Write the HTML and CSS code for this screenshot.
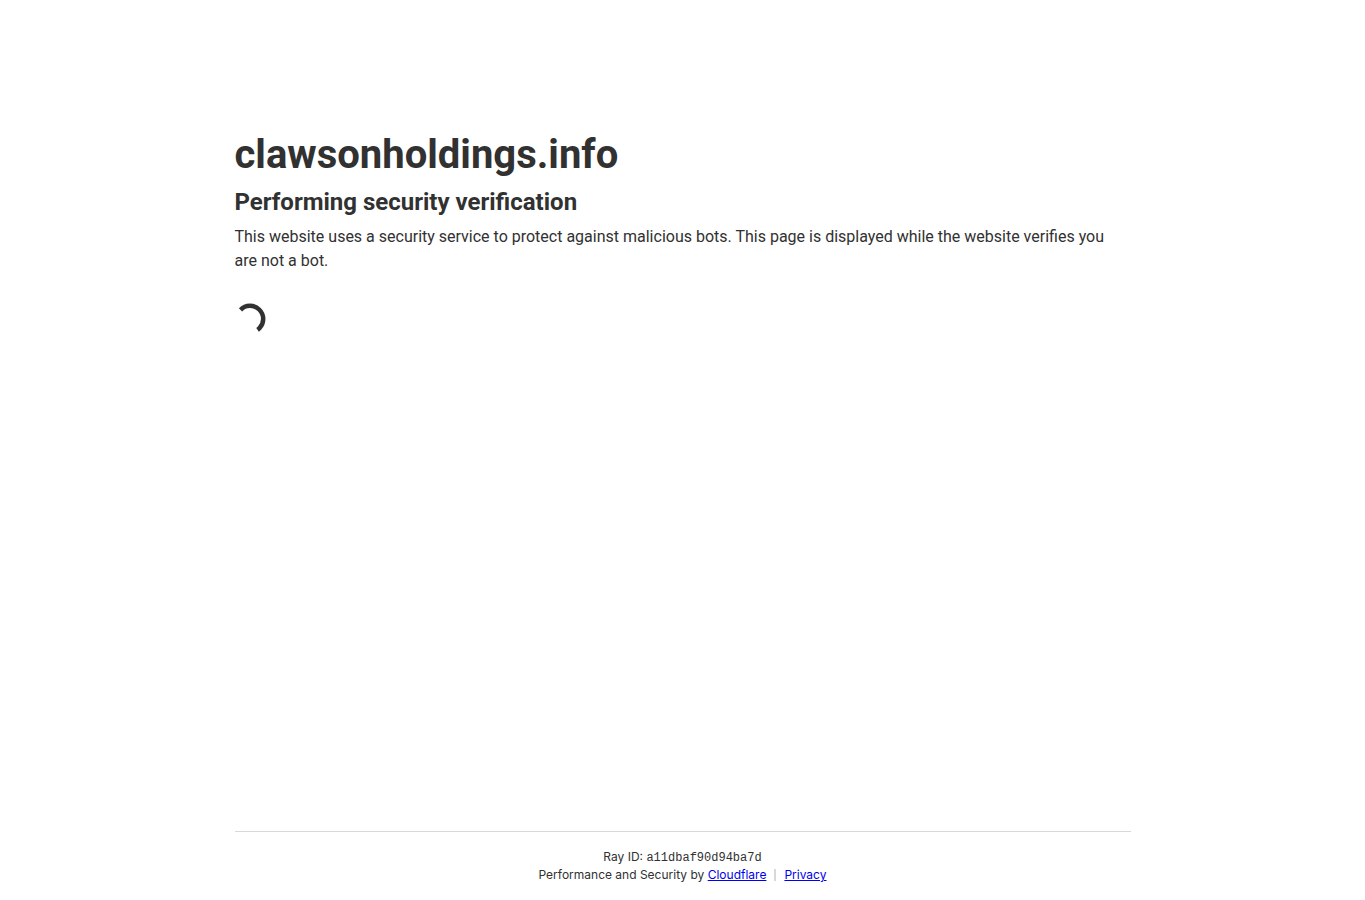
FILE: index.html
```html
<!DOCTYPE html>
<html lang="en">

<head>
  <meta charset="UTF-8" />
  <meta name="viewport" content="width=device-width, initial-scale=1.0" />
  <title>Just a moment...</title>
  <link rel="stylesheet" href="styles.css">
</head>

<body>
  <main class="main-wrapper">
    <div class="main-content">
      <h1>clawsonholdings.info</h1>
      <h2>Performing security verification</h2>
      <p>This website uses a security service to protect against malicious bots. This page is displayed while the website verifies you are not a bot.</p>
      <div class="spinner" role="status" aria-label="Loading">
        <svg viewBox="0 0 32 32" width="32" height="32" aria-hidden="true">
          <circle cx="15" cy="17" r="13.2" stroke-dasharray="43.8 40" transform="rotate(-136 15 17)" />
        </svg>
      </div>
    </div>
  </main>
  <footer class="footer">
    <div class="footer-inner">
      <div class="ray-id">Ray ID: <code>a11dbaf90d94ba7d</code></div>
      <div class="footer-text">
        <span>Performance and Security by <a href="#">Cloudflare</a></span>
        <span class="footer-divider"></span>
        <a href="#">Privacy</a>
      </div>
    </div>
  </footer>
</body>

</html>
```
FILE: styles.css
```css
* {
  box-sizing: border-box;
  margin: 0;
  padding: 0;
}

body {
  display: flex;
  flex-direction: column;
  min-height: 100vh;
  color: #313131;
  font-family: Roboto, "Liberation Sans", sans-serif;
  font-size: 16px;
  line-height: 24px;
}

.main-wrapper {
  flex: 1;
  width: 100%;
  max-width: 960px;
  margin: 0 auto;
  padding: 128px 32px 0;
}

h1 {
  font-size: 40px;
  font-weight: 700;
  line-height: 54px;
}

h2 {
  margin: 2px 0 5px;
  font-size: 24px;
  font-weight: 700;
  line-height: 36px;
}

p {
  padding-right: 8px;
}

.spinner {
  display: flex;
  margin-top: 29px;
}

.spinner circle {
  fill: none;
  stroke: #313131;
  stroke-width: 4.5;
}

/* footer */
.footer {
  width: 100%;
  max-width: 960px;
  margin: 0 auto;
  padding: 0 32px;
  font-family: Inter, "Liberation Sans", sans-serif;
  font-size: 12px;
  line-height: 18px;
  text-align: center;
}

.footer-inner {
  padding: 16px 0;
  border-top: 1px solid #d9d9d9;
}

.ray-id code {
  font-family: "Liberation Mono", monospace;
  line-height: 12px;
}

.footer-text {
  display: flex;
  justify-content: center;
  align-items: center;
}

.footer-divider {
  height: 12px;
  margin: 0 8px;
  border-left: 2px solid #d9d9d9;
}

.footer-text a {
  color: #0000ee;
}
```
